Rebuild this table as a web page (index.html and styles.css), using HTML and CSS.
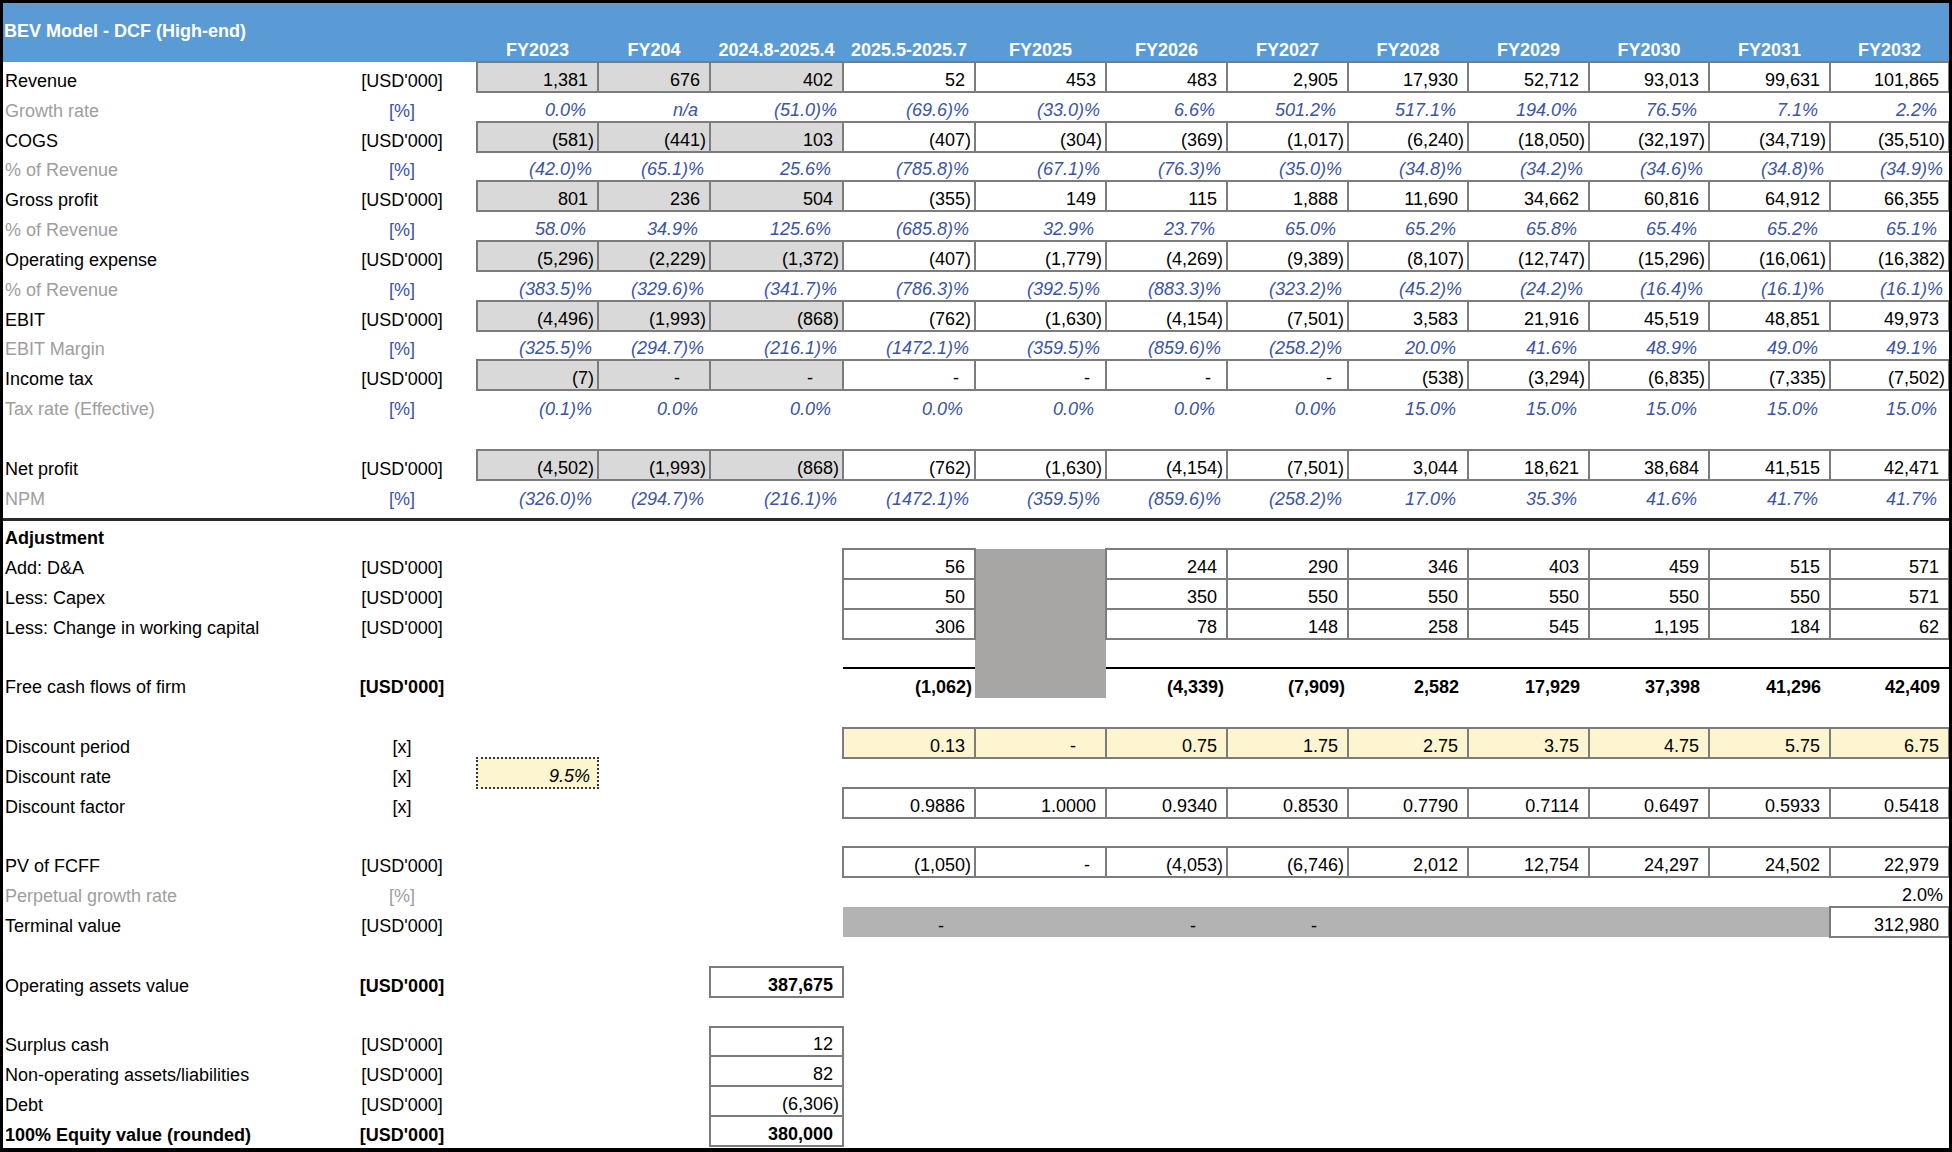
FILE: index.html
```html
<!DOCTYPE html>
<html lang="en">
<head>
<meta charset="utf-8">
<title>BEV Model - DCF (High-end)</title>
<link rel="stylesheet" href="styles.css">
</head>
<body>
<div class="sheet">
<table class="grid">
<colgroup>
<col class="w-label"><col class="w-unit"><col class="w-gap">
<col class="w121"><col class="w112"><col class="w133"><col class="w132"><col class="w131"><col class="w121"><col class="w121"><col class="w120"><col class="w121"><col class="w120"><col class="w121"><col class="w119">
</colgroup>
<tbody>
<tr class="hdr1"><td class="title" colspan="3">BEV Model - DCF (High-end)</td><td colspan="12"></td></tr>
<tr class="hdr2"><td colspan="3"></td><td>FY2023</td><td>FY204</td><td>2024.8-2025.4</td><td>2025.5-2025.7</td><td>FY2025</td><td>FY2026</td><td>FY2027</td><td>FY2028</td><td>FY2029</td><td>FY2030</td><td>FY2031</td><td>FY2032</td></tr>

<tr class="r"><td class="l">Revenue</td><td class="u">[USD'000]</td><td></td>
<td class="g n">1,381</td><td class="g n">676</td><td class="g n">402</td><td class="b n">52</td><td class="b n">453</td><td class="b n">483</td><td class="b n">2,905</td><td class="b n">17,930</td><td class="b n">52,712</td><td class="b n">93,013</td><td class="b n">99,631</td><td class="b n">101,865</td></tr>

<tr class="r"><td class="l lg">Growth rate</td><td class="u ub">[%]</td><td></td>
<td class="p n">0.0%</td><td class="p n">n/a</td><td class="p">(51.0)%</td><td class="p">(69.6)%</td><td class="p">(33.0)%</td><td class="p n">6.6%</td><td class="p n">501.2%</td><td class="p n">517.1%</td><td class="p n">194.0%</td><td class="p n">76.5%</td><td class="p n">7.1%</td><td class="p n">2.2%</td></tr>

<tr class="r"><td class="l">COGS</td><td class="u">[USD'000]</td><td></td>
<td class="g">(581)</td><td class="g">(441)</td><td class="g n">103</td><td class="b">(407)</td><td class="b">(304)</td><td class="b">(369)</td><td class="b">(1,017)</td><td class="b">(6,240)</td><td class="b">(18,050)</td><td class="b">(32,197)</td><td class="b">(34,719)</td><td class="b">(35,510)</td></tr>

<tr class="r"><td class="l lg">% of Revenue</td><td class="u ub">[%]</td><td></td>
<td class="p">(42.0)%</td><td class="p">(65.1)%</td><td class="p n">25.6%</td><td class="p">(785.8)%</td><td class="p">(67.1)%</td><td class="p">(76.3)%</td><td class="p">(35.0)%</td><td class="p">(34.8)%</td><td class="p">(34.2)%</td><td class="p">(34.6)%</td><td class="p">(34.8)%</td><td class="p">(34.9)%</td></tr>

<tr class="r"><td class="l">Gross profit</td><td class="u">[USD'000]</td><td></td>
<td class="g n">801</td><td class="g n">236</td><td class="g n">504</td><td class="b">(355)</td><td class="b n">149</td><td class="b n">115</td><td class="b n">1,888</td><td class="b n">11,690</td><td class="b n">34,662</td><td class="b n">60,816</td><td class="b n">64,912</td><td class="b n">66,355</td></tr>

<tr class="r"><td class="l lg">% of Revenue</td><td class="u ub">[%]</td><td></td>
<td class="p n">58.0%</td><td class="p n">34.9%</td><td class="p n">125.6%</td><td class="p">(685.8)%</td><td class="p n">32.9%</td><td class="p n">23.7%</td><td class="p n">65.0%</td><td class="p n">65.2%</td><td class="p n">65.8%</td><td class="p n">65.4%</td><td class="p n">65.2%</td><td class="p n">65.1%</td></tr>

<tr class="r"><td class="l">Operating expense</td><td class="u">[USD'000]</td><td></td>
<td class="g">(5,296)</td><td class="g">(2,229)</td><td class="g">(1,372)</td><td class="b">(407)</td><td class="b">(1,779)</td><td class="b">(4,269)</td><td class="b">(9,389)</td><td class="b">(8,107)</td><td class="b">(12,747)</td><td class="b">(15,296)</td><td class="b">(16,061)</td><td class="b">(16,382)</td></tr>

<tr class="r"><td class="l lg">% of Revenue</td><td class="u ub">[%]</td><td></td>
<td class="p">(383.5)%</td><td class="p">(329.6)%</td><td class="p">(341.7)%</td><td class="p">(786.3)%</td><td class="p">(392.5)%</td><td class="p">(883.3)%</td><td class="p">(323.2)%</td><td class="p">(45.2)%</td><td class="p">(24.2)%</td><td class="p">(16.4)%</td><td class="p">(16.1)%</td><td class="p">(16.1)%</td></tr>

<tr class="r"><td class="l">EBIT</td><td class="u">[USD'000]</td><td></td>
<td class="g">(4,496)</td><td class="g">(1,993)</td><td class="g">(868)</td><td class="b">(762)</td><td class="b">(1,630)</td><td class="b">(4,154)</td><td class="b">(7,501)</td><td class="b n">3,583</td><td class="b n">21,916</td><td class="b n">45,519</td><td class="b n">48,851</td><td class="b n">49,973</td></tr>

<tr class="r"><td class="l lg">EBIT Margin</td><td class="u ub">[%]</td><td></td>
<td class="p">(325.5)%</td><td class="p">(294.7)%</td><td class="p">(216.1)%</td><td class="p">(1472.1)%</td><td class="p">(359.5)%</td><td class="p">(859.6)%</td><td class="p">(258.2)%</td><td class="p n">20.0%</td><td class="p n">41.6%</td><td class="p n">48.9%</td><td class="p n">49.0%</td><td class="p n">49.1%</td></tr>

<tr class="r"><td class="l">Income tax</td><td class="u">[USD'000]</td><td></td>
<td class="g">(7)</td><td class="g d2">-</td><td class="g d2">-</td><td class="b d1">-</td><td class="b d1">-</td><td class="b d1">-</td><td class="b d1">-</td><td class="b">(538)</td><td class="b">(3,294)</td><td class="b">(6,835)</td><td class="b">(7,335)</td><td class="b">(7,502)</td></tr>

<tr class="r"><td class="l lg">Tax rate (Effective)</td><td class="u ub">[%]</td><td></td>
<td class="p">(0.1)%</td><td class="p n">0.0%</td><td class="p n">0.0%</td><td class="p n">0.0%</td><td class="p n">0.0%</td><td class="p n">0.0%</td><td class="p n">0.0%</td><td class="p n">15.0%</td><td class="p n">15.0%</td><td class="p n">15.0%</td><td class="p n">15.0%</td><td class="p n">15.0%</td></tr>

<tr class="r"><td class="l"></td><td></td><td></td></tr>

<tr class="r"><td class="l">Net profit</td><td class="u">[USD'000]</td><td></td>
<td class="g">(4,502)</td><td class="g">(1,993)</td><td class="g">(868)</td><td class="b">(762)</td><td class="b">(1,630)</td><td class="b">(4,154)</td><td class="b">(7,501)</td><td class="b n">3,044</td><td class="b n">18,621</td><td class="b n">38,684</td><td class="b n">41,515</td><td class="b n">42,471</td></tr>

<tr class="r"><td class="l lg">NPM</td><td class="u ub">[%]</td><td></td>
<td class="p">(326.0)%</td><td class="p">(294.7)%</td><td class="p">(216.1)%</td><td class="p">(1472.1)%</td><td class="p">(359.5)%</td><td class="p">(859.6)%</td><td class="p">(258.2)%</td><td class="p n">17.0%</td><td class="p n">35.3%</td><td class="p n">41.6%</td><td class="p n">41.7%</td><td class="p n">41.7%</td></tr>

<tr class="sep"><td></td><td></td><td></td><td></td><td></td><td></td><td></td><td></td><td></td><td></td><td></td><td></td><td></td><td></td><td></td></tr>

<tr class="r"><td class="l bd">Adjustment</td><td></td><td></td></tr>

<tr class="r"><td class="l">Add: D&amp;A</td><td class="u">[USD'000]</td><td></td><td></td><td></td><td></td>
<td class="b n">56</td><td class="gc"></td><td class="b n">244</td><td class="b n">290</td><td class="b n">346</td><td class="b n">403</td><td class="b n">459</td><td class="b n">515</td><td class="b n">571</td></tr>

<tr class="r"><td class="l">Less: Capex</td><td class="u">[USD'000]</td><td></td><td></td><td></td><td></td>
<td class="b n">50</td><td class="gc"></td><td class="b n">350</td><td class="b n">550</td><td class="b n">550</td><td class="b n">550</td><td class="b n">550</td><td class="b n">550</td><td class="b n">571</td></tr>

<tr class="r"><td class="l">Less: Change in working capital</td><td class="u">[USD'000]</td><td></td><td></td><td></td><td></td>
<td class="b n">306</td><td class="gc"></td><td class="b n">78</td><td class="b n">148</td><td class="b n">258</td><td class="b n">545</td><td class="b n">1,195</td><td class="b n">184</td><td class="b n">62</td></tr>

<tr class="r"><td class="l"></td><td></td><td></td><td></td><td></td><td></td><td></td><td class="gc"></td></tr>

<tr class="r"><td class="l">Free cash flows of firm</td><td class="u bd">[USD'000]</td><td></td><td></td><td></td><td></td>
<td class="ft bd">(1,062)</td><td class="gc"></td><td class="ft bd">(4,339)</td><td class="ft bd">(7,909)</td><td class="ft bd n">2,582</td><td class="ft bd n">17,929</td><td class="ft bd n">37,398</td><td class="ft bd n">41,296</td><td class="ft bd n">42,409</td></tr>

<tr class="r"><td class="l"></td><td></td><td></td></tr>

<tr class="r"><td class="l">Discount period</td><td class="u">[x]</td><td></td><td></td><td></td><td></td>
<td class="y n">0.13</td><td class="y d2">-</td><td class="y n">0.75</td><td class="y n">1.75</td><td class="y n">2.75</td><td class="y n">3.75</td><td class="y n">4.75</td><td class="y n">5.75</td><td class="y n">6.75</td></tr>

<tr class="r"><td class="l">Discount rate</td><td class="u">[x]</td><td></td>
<td class="y yin">9.5%</td></tr>

<tr class="r"><td class="l">Discount factor</td><td class="u">[x]</td><td></td><td></td><td></td><td></td>
<td class="b n">0.9886</td><td class="b n">1.0000</td><td class="b n">0.9340</td><td class="b n">0.8530</td><td class="b n">0.7790</td><td class="b n">0.7114</td><td class="b n">0.6497</td><td class="b n">0.5933</td><td class="b n">0.5418</td></tr>

<tr class="r"><td class="l"></td><td></td><td></td></tr>

<tr class="r"><td class="l">PV of FCFF</td><td class="u">[USD'000]</td><td></td><td></td><td></td><td></td>
<td class="b">(1,050)</td><td class="b d1">-</td><td class="b">(4,053)</td><td class="b">(6,746)</td><td class="b n">2,012</td><td class="b n">12,754</td><td class="b n">24,297</td><td class="b n">24,502</td><td class="b n">22,979</td></tr>

<tr class="r"><td class="l lg">Perpetual growth rate</td><td class="u lg">[%]</td><td></td><td></td><td></td><td></td><td></td><td></td><td></td><td></td><td></td><td></td><td></td><td></td>
<td class="pg">2.0%</td></tr>

<tr class="r"><td class="l">Terminal value</td><td class="u">[USD'000]</td><td></td><td></td><td></td><td></td>
<td class="tv d3">-</td><td class="tv"></td><td class="tv d3">-</td><td class="tv d3">-</td><td class="tv"></td><td class="tv"></td><td class="tv"></td><td class="tv"></td><td class="b n">312,980</td></tr>

<tr class="r"><td class="l"></td><td></td><td></td></tr>

<tr class="r"><td class="l">Operating assets value</td><td class="u bd">[USD'000]</td><td></td><td></td><td></td>
<td class="b bd n">387,675</td></tr>

<tr class="r"><td class="l"></td><td></td><td></td></tr>

<tr class="r"><td class="l">Surplus cash</td><td class="u">[USD'000]</td><td></td><td></td><td></td>
<td class="b n">12</td></tr>

<tr class="r"><td class="l">Non-operating assets/liabilities</td><td class="u">[USD'000]</td><td></td><td></td><td></td>
<td class="b n">82</td></tr>

<tr class="r"><td class="l">Debt</td><td class="u">[USD'000]</td><td></td><td></td><td></td>
<td class="b">(6,306)</td></tr>

<tr class="r"><td class="l bd">100% Equity value (rounded)</td><td class="u bd">[USD'000]</td><td></td><td></td><td></td>
<td class="b bd n">380,000</td></tr>
</tbody>
</table>
</div>
</body>
</html>
```

FILE: styles.css
```css
html, body {
  margin: 0;
  padding: 0;
  background: #000;
}

body {
  width: 1952px;
  height: 1152px;
  overflow: hidden;
  font-family: "Liberation Sans", Arial, sans-serif;
  font-size: 18px;
  color: #000;
}

.sheet {
  margin: 3px 3px 0 3px;
  width: 1946px;
  height: 1145px;
  background: #fff;
  overflow: hidden;
}

.grid {
  border-collapse: collapse;
  table-layout: fixed;
  width: 1946px;
}

.w-label { width: 352px; }
.w-unit { width: 94px; }
.w-gap { width: 28px; }
.w112 { width: 112px; }
.w119 { width: 119px; }
.w120 { width: 120px; }
.w121 { width: 121px; }
.w131 { width: 131px; }
.w132 { width: 132px; }
.w133 { width: 133px; }

.grid td {
  padding: 0 3px 1px 3px;
  line-height: 20px;
  vertical-align: bottom;
  white-space: nowrap;
  text-align: right;
  overflow: visible;
}

/* header band */
.hdr1 { height: 37px; }
.hdr2 { height: 21px; }

.hdr1 td,
.hdr2 td {
  background: #5b9bd5;
  color: #fff;
  font-weight: bold;
  text-align: center;
}

.hdr1 td.title {
  text-align: left;
  padding-left: 1px;
  line-height: 16px;
}

/* rows */
.r { height: 29.85px; }
.sep { height: 9.5px; }
.sep td { border-bottom: 3px solid #2a2a2a; }

.l {
  text-align: left !important;
  padding-left: 2px !important;
}

.lg { color: #9e9e9e; }
.u { text-align: center !important; }
.ub { color: #3a54a6; }
.bd { font-weight: bold; }

/* boxed cells */
.b,
.g,
.y {
  border: 2px solid #7c7c7c;
}

.g { background: #d9d9d9; }
.y { background: #fcf5cf; }

.gc { background: #a8a5a5; }
.tv { background: #b3b3b3; }

.ft { border-top: 2px solid #000; }

/* number formats */
.n::after {
  content: ")";
  visibility: hidden;
}

.p {
  font-style: italic;
  color: #3a54a6;
  padding-right: 6px !important;
}

.yin {
  font-style: italic;
  padding-right: 7px !important;
}

.y.yin { border-style: dotted; border-color: #333; }

.pg { padding-right: 6px !important; }

.d1 { padding-right: 15px !important; }
.d2 { padding-right: 29px !important; }
.d3 { padding-right: 31px !important; }
```
